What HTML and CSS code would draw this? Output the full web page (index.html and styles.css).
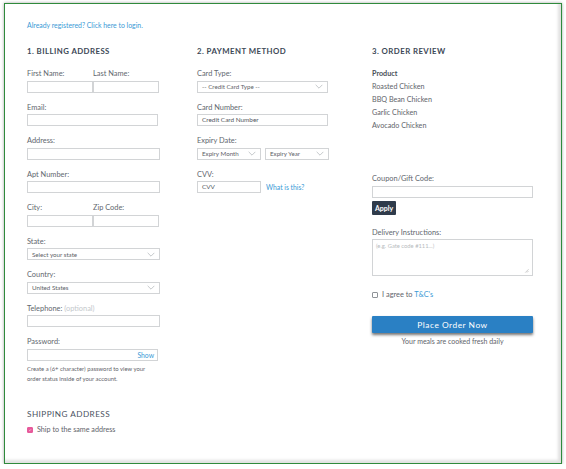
FILE: index.html
```html
<!DOCTYPE html>
<html lang="en">
<head>
    <meta charset="UTF-8">
    <meta name="viewport" content="width=device-width, initial-scale=1.0">
    <title>Checkout</title>
    <link rel="stylesheet" href="styles.css">
</head>
<body>
    <div class="co-page">
        <a href="#" class="co-login">Already registered? Click here to login.</a>

        <div class="co-columns">
            <!-- Billing -->
            <section class="co-col co-billing">
                <h2 class="co-title">1. Billing Address</h2>

                <div class="co-pair">
                    <div class="co-field">
                        <label>First Name:</label>
                        <input type="text" class="co-input co-half">
                    </div>
                    <div class="co-field">
                        <label>Last Name:</label>
                        <input type="text" class="co-input co-half">
                    </div>
                </div>

                <div class="co-field">
                    <label>Email:</label>
                    <input type="text" class="co-input co-w130">
                </div>
                <div class="co-field">
                    <label>Address:</label>
                    <input type="text" class="co-input co-w132">
                </div>
                <div class="co-field">
                    <label>Apt Number:</label>
                    <input type="text" class="co-input co-w132">
                </div>

                <div class="co-pair">
                    <div class="co-field">
                        <label>City:</label>
                        <input type="text" class="co-input co-half">
                    </div>
                    <div class="co-field">
                        <label>Zip Code:</label>
                        <input type="text" class="co-input co-half">
                    </div>
                </div>

                <div class="co-field">
                    <label>State:</label>
                    <div class="co-select co-w132">
                        <span>Select your state</span>
                        <svg viewBox="0 0 12 7" class="co-chev"><path d="M1 1l5 5 5-5"/></svg>
                    </div>
                </div>
                <div class="co-field">
                    <label>Country:</label>
                    <div class="co-select co-w132">
                        <span>United States</span>
                        <svg viewBox="0 0 12 7" class="co-chev"><path d="M1 1l5 5 5-5"/></svg>
                    </div>
                </div>
                <div class="co-field">
                    <label>Telephone: <span class="co-optional">(optional)</span></label>
                    <input type="text" class="co-input co-w132">
                </div>
                <div class="co-field co-field-last">
                    <label>Password:</label>
                    <div class="co-password co-w130">
                        <a href="#">Show</a>
                    </div>
                </div>
                <p class="co-help">Create a (6+ character) password to view your order status inside of your account.</p>

                <h2 class="co-title co-ship-title">Shipping Address</h2>
                <div class="co-check-row">
                    <span class="co-check co-check-on">
                        <svg viewBox="0 0 8 8"><path d="M2 4.3l1.4 1.3L6 2.6"/></svg>
                    </span>
                    <span>Ship to the same address</span>
                </div>
            </section>

            <!-- Payment -->
            <section class="co-col co-payment">
                <h2 class="co-title">2. Payment Method</h2>

                <div class="co-field">
                    <label>Card Type:</label>
                    <div class="co-select co-w130">
                        <span>-- Credit Card Type --</span>
                        <svg viewBox="0 0 12 7" class="co-chev"><path d="M1 1l5 5 5-5"/></svg>
                    </div>
                </div>
                <div class="co-field">
                    <label>Card Number:</label>
                    <div class="co-input co-w130 co-filled">Credit Card Number</div>
                </div>
                <div class="co-field">
                    <label>Expiry Date:</label>
                    <div class="co-expiry">
                        <div class="co-select co-w64">
                            <span>Expiry Month</span>
                            <svg viewBox="0 0 12 7" class="co-chev"><path d="M1 1l5 5 5-5"/></svg>
                        </div>
                        <div class="co-select co-w64">
                            <span>Expiry Year</span>
                            <svg viewBox="0 0 12 7" class="co-chev"><path d="M1 1l5 5 5-5"/></svg>
                        </div>
                    </div>
                </div>
                <div class="co-field">
                    <label>CVV:</label>
                    <div class="co-cvv">
                        <div class="co-input co-w64 co-filled">CVV</div>
                        <a href="#">What is this?</a>
                    </div>
                </div>
            </section>

            <!-- Review -->
            <section class="co-col co-review">
                <h2 class="co-title">3. Order Review</h2>

                <ul class="co-products">
                    <li class="co-products-head">Product</li>
                    <li>Roasted Chicken</li>
                    <li>BBQ Bean Chicken</li>
                    <li>Garlic Chicken</li>
                    <li>Avocado Chicken</li>
                </ul>

                <div class="co-field co-coupon">
                    <label>Coupon/Gift Code:</label>
                    <input type="text" class="co-input co-w161">
                </div>
                <button class="co-apply">Apply</button>

                <div class="co-field co-delivery">
                    <label>Delivery Instructions:</label>
                    <div class="co-textarea">
                        <span>(e.g. Gate code #111...)</span>
                        <svg viewBox="0 0 6 6" class="co-grip"><path d="M5.5 1.5l-4 4M5.5 3.5l-2 2"/></svg>
                    </div>
                </div>

                <div class="co-check-row co-agree">
                    <span class="co-check"></span>
                    <span>I agree to <a href="#">T&amp;C's</a></span>
                </div>

                <button class="co-order">Place Order Now</button>
                <p class="co-fresh">Your meals are cooked fresh daily</p>
            </section>
        </div>
    </div>
</body>
</html>
```

FILE: styles.css
```css
/* Checkout page, framed */
* {
    box-sizing: border-box;
}

body {
    margin: 0;
    background: #ffffff;
    font-family: Lato, "Open Sans", sans-serif;
    color: #5f646b;
}

.co-page {
    margin: 3px 0 0 4px;
    width: 558px;
    height: 461px;
    border: 1px solid #2f8a3c;
    box-shadow: 0 0 3px rgba(0, 0, 0, 0.35), inset -3px -3px 3px rgba(0, 0, 0, 0.12);
    padding: 16px 0 0 22px;
}

a {
    color: #3a9ad6;
    text-decoration: none;
}

.co-login {
    display: block;
    font-size: 6.9px;
    line-height: 10px;
}

/* Three columns */
.co-columns {
    display: grid;
    grid-template-columns: 170px 175px 161px;
    margin-top: 16px;
}

.co-title {
    margin: 0 0 13px;
    font-size: 7.8px;
    line-height: 10px;
    font-weight: 700;
    letter-spacing: 0.45px;
    text-transform: uppercase;
    color: #3d4856;
}

/* Fields */
.co-field {
    display: flex;
    flex-direction: column;
    margin-bottom: 10px;
}

.co-field label {
    font-size: 7.4px;
    line-height: 10px;
    margin-bottom: 1.5px;
    color: #62676e;
}

.co-optional {
    color: #c4c8cc;
}

.co-pair {
    display: flex;
}

.co-input {
    height: 12px;
    margin: 0;
    padding: 0 4px;
    border: 1px solid #d2d4d6;
    border-radius: 0;
    background: #fff;
    font-family: inherit;
    font-size: 6.4px;
    line-height: 10px;
    color: #50555c;
    outline: none;
}

.co-filled {
    display: flex;
    align-items: center;
}

.co-half { width: 66px; }
.co-w130 { width: 131px; }
.co-w132 { width: 133px; }
.co-w161 { width: 161px; }
.co-w64 { width: 64px; }

/* Fake selects */
.co-select {
    height: 12px;
    display: flex;
    align-items: center;
    justify-content: space-between;
    padding: 0 4px;
    border: 1px solid #d2d4d6;
    font-size: 6.2px;
    color: #5d6167;
}

.co-chev {
    width: 8px;
    height: 5px;
    fill: none;
    stroke: #a9adb2;
    stroke-width: 1;
}

.co-expiry {
    display: flex;
    gap: 4px;
}

.co-cvv {
    display: flex;
    align-items: center;
    gap: 5px;
    font-size: 6.8px;
}

.co-password {
    height: 12px;
    display: flex;
    align-items: center;
    justify-content: flex-end;
    padding: 0 3px;
    border: 1px solid #d2d4d6;
    font-size: 6.8px;
}

.co-field-last {
    margin-bottom: 3px;
}

.co-help {
    margin: 0;
    width: 130px;
    font-size: 5.9px;
    line-height: 10.5px;
    color: #5f646b;
}

.co-ship-title {
    margin: 24px 0 6px;
    font-weight: 400;
    font-size: 8.2px;
    color: #4a5361;
}

/* Checkboxes */
.co-check-row {
    display: flex;
    align-items: center;
    gap: 4px;
    font-size: 7.2px;
    line-height: 10px;
}

.co-check {
    width: 6px;
    height: 6px;
    border: 1px solid #8f9398;
    border-radius: 1px;
    display: flex;
}

.co-check-on {
    border-color: #e75a9b;
    background: #e75a9b;
}

.co-check svg {
    width: 100%;
    height: 100%;
    fill: none;
    stroke: #fff;
    stroke-width: 1;
}

/* Order review */
.co-products {
    list-style: none;
    margin: -2px 0 0;
    padding: 0;
    font-size: 7.2px;
    line-height: 13px;
}

.co-products-head {
    font-weight: 700;
    color: #4a5058;
}

.co-coupon {
    margin-top: 42px;
    margin-bottom: 3px;
}

.co-apply {
    display: block;
    width: 24px;
    height: 14px;
    padding: 0;
    border: none;
    border-radius: 1px;
    background: #2f3b4b;
    color: #fff;
    font-family: inherit;
    font-size: 7px;
    font-weight: 700;
}

.co-delivery {
    margin-top: 13px;
    margin-bottom: 14px;
}

.co-textarea {
    height: 37px;
    width: 161px;
    border: 1px solid #d2d4d6;
    padding: 2px 3px;
    display: flex;
    justify-content: space-between;
    font-size: 5.8px;
    color: #b8bcc0;
}

.co-grip {
    width: 5px;
    height: 5px;
    align-self: flex-end;
    fill: none;
    stroke: #aaa;
    stroke-width: 0.7;
}

.co-agree {
    font-size: 7.4px;
}

.co-order {
    display: block;
    margin-top: 16px;
    width: 161px;
    height: 17px;
    border: none;
    border-radius: 1px;
    background: #2a80c4;
    color: #fff;
    font-family: inherit;
    font-size: 8.4px;
    letter-spacing: 0.5px;
    box-shadow: 0 2px 3px rgba(0, 0, 0, 0.55);
}

.co-fresh {
    margin: 3px 0 0;
    text-align: center;
    font-size: 7px;
    line-height: 10px;
    color: #5f646b;
}
```
